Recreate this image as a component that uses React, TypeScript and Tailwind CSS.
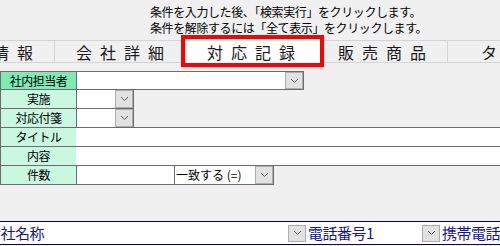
import React from 'react';

const jp = { fontFamily: '"Noto Sans CJK JP", "Noto Sans", sans-serif' };

function Chevron() {
  return (
    <svg width="9" height="6" viewBox="0 0 9 6">
      <path d="M1 1 L4.5 4.5 L8 1" fill="none" stroke="#5a5a5a" strokeWidth="1" />
    </svg>
  );
}

function DropButton({ className = "" }: { className?: string }) {
  return (
    <div className={"w-[18px] flex items-center justify-center bg-[#e1e1e1] border border-[#adadad] " + className}>
      <Chevron />
    </div>
  );
}

function Label({ text, dark }: { text: string; dark?: boolean }) {
  return (
    <div
      className={
        "w-[77px] h-full shrink-0 border border-[#6c6c6c] flex items-center justify-center text-[12px] tracking-[-0.5px] text-black " +
        (dark ? "bg-[#7eeab6]" : "bg-[#c9f7df]")
      }
    >
      {text}
    </div>
  );
}

const tabs = ["基本情報", "会社詳細", "対応記録", "販売商品", "タスク"];

export default function App() {
  return (
    <div className="w-[500px] h-[246px] overflow-hidden bg-[#f0f0f0] text-black" style={jp}>
      {/* hint text */}
      <div className="pl-[150px] pt-[4px] text-[12px] leading-[16px] tracking-[-0.4px] whitespace-nowrap">
        <div>条件を入力した後、「検索実行」をクリックします。</div>
        <div>条件を解除するには「全て表示」をクリックします。</div>
      </div>

      {/* tabs */}
      <div className="mt-[4px] h-[23px] border-y border-[#d4d4d4] flex">
        <div className="flex ml-[-76px]">
          {tabs.map((t, i) => (
            <div
              key={t}
              className="relative w-[131px] shrink-0 border-r border-[#d4d4d4] flex items-center justify-center text-[16px] tracking-[8px] pl-[8px] text-[#1a1a1a]"
            >
              {i === 2 && (
                <div className="absolute -top-[6px] -bottom-[5px] -left-[5px] -right-[8px] border-4 border-[#ff0000] bg-white" />
              )}
              <span className="relative">{t}</span>
            </div>
          ))}
        </div>
      </div>

      {/* search form */}
      <div className="mt-[8px] flex flex-col">
        <div className="flex h-[19px]">
          <Label text="社内担当者" dark />
          <div className="-ml-px w-[228px] h-full border border-[#6c6c6c] bg-white flex justify-end">
            <DropButton />
          </div>
        </div>
        <div className="flex h-[20px] -mt-px">
          <Label text="実施" />
          <div className="-ml-px w-[58px] h-full border border-[#6c6c6c] bg-white flex justify-end">
            <DropButton />
          </div>
        </div>
        <div className="flex h-[20px] -mt-px">
          <Label text="対応付箋" />
          <div className="-ml-px w-[58px] h-full border border-[#6c6c6c] bg-white flex justify-end">
            <DropButton />
          </div>
        </div>
        <div className="flex h-[20px] -mt-px">
          <Label text="タイトル" />
          <div className="-ml-px flex-1 h-full border-y border-[#6c6c6c] bg-white" />
        </div>
        <div className="flex h-[20px] -mt-px">
          <Label text="内容" />
          <div className="-ml-px flex-1 h-full border-y border-[#6c6c6c] bg-white" />
        </div>
        <div className="flex h-[20px] -mt-px">
          <Label text="件数" />
          <div className="-ml-px w-[99px] h-full border border-[#6c6c6c] bg-white" />
          <div className="-ml-px w-[100px] h-full border border-[#6c6c6c] bg-white flex items-center">
            <span className="flex-1 text-[12px] pl-px whitespace-nowrap">一致する (=)</span>
            <DropButton className="h-full" />
          </div>
          <div className="flex-1 border-t border-[#6c6c6c]" />
        </div>
      </div>

      {/* result header */}
      <div className="mt-[36px] h-[26px] bg-white border-t border-b-[3px] border-double border-[#000080] flex items-center text-[15px] tracking-[-0.5px] text-[#14149c] whitespace-nowrap">
        <div className="flex ml-[-34px]">
          <div className="w-[322px] flex items-center gap-[2px]">
            <DropButton className="h-[17px]" />
            <span>会社名称</span>
          </div>
          <div className="w-[134px] flex items-center gap-[2px]">
            <DropButton className="h-[17px]" />
            <span>電話番号1</span>
          </div>
          <div className="w-[134px] flex items-center gap-[2px]">
            <DropButton className="h-[17px]" />
            <span>携帯電話</span>
          </div>
        </div>
      </div>
    </div>
  );
}
